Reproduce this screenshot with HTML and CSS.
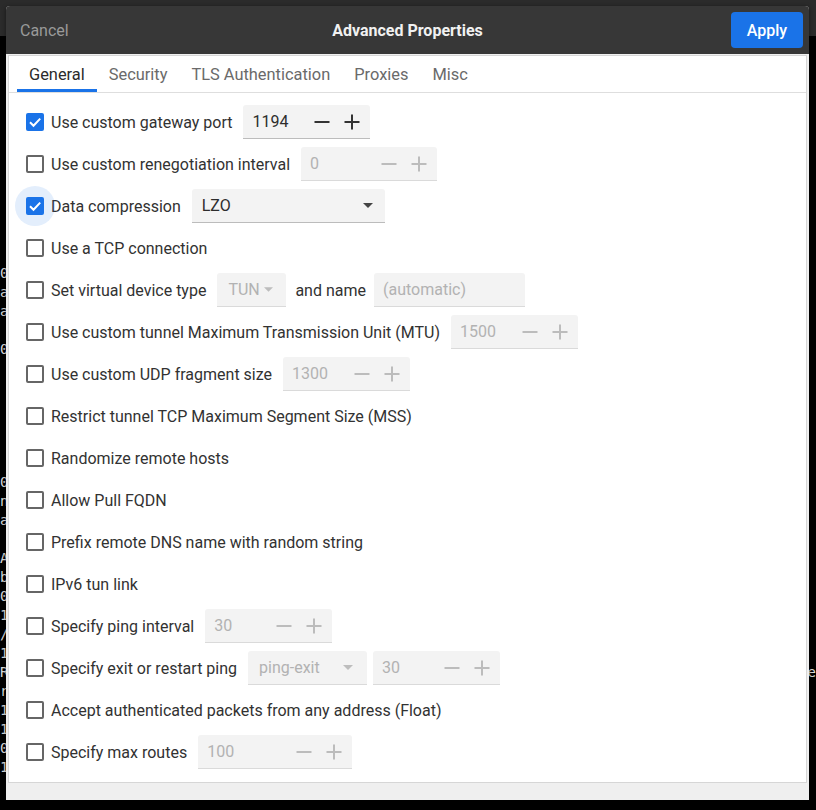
FILE: index.html
```html
<!DOCTYPE html>
<html>
<head>
<meta charset="utf-8">
<title>Advanced Properties</title>
<link rel="stylesheet" href="styles.css">
</head>
<body>
<div class="topbar"></div>
<div class="term"><div class="tl"> </div><div class="tl"> </div><div class="tl"> </div><div class="tl"> </div><div class="tl"> </div><div class="tl"> </div><div class="tl"> </div><div class="tl"> </div><div class="tl"> </div><div class="tl"> </div><div class="tl"> </div><div class="tl"> </div><div class="tl">0</div><div class="tl">a</div><div class="tl">a</div><div class="tl"> </div><div class="tl">0</div><div class="tl"> </div><div class="tl"> </div><div class="tl"> </div><div class="tl"> </div><div class="tl"> </div><div class="tl"> </div><div class="tl">0</div><div class="tl">n</div><div class="tl">a</div><div class="tl"> </div><div class="tl">A</div><div class="tl">b</div><div class="tl">0</div><div class="tl">1</div><div class="tl">/</div><div class="tl">1</div><div class="tl"><span>R</span><span class="tail">e</span></div><div class="tl">r</div><div class="tl">1</div><div class="tl">1</div><div class="tl">0</div><div class="tl">1</div></div>

<div class="dialog">
  <div class="header">
    <span class="cancel">Cancel</span>
    <span class="title">Advanced Properties</span>
    <span class="apply">Apply</span>
  </div>
  <div class="content">
    <div class="frame">
      <div class="tabs">
        <span class="tab active">General</span>
        <span class="tab">Security</span>
        <span class="tab">TLS Authentication</span>
        <span class="tab">Proxies</span>
        <span class="tab">Misc</span>
      </div>
      <div class="rows">
        <div class="row">
          <span class="check checked"><span class="box"><svg viewBox="0 0 18 18" width="18" height="18"><polyline points="4,9.3 7.5,12.8 14.2,5.6" fill="none" stroke="#fff" stroke-width="2"/></svg></span><span>Use custom gateway port</span></span>
          <span class="field spin"><span class="val">1194</span><span class="btns"><svg viewBox="0 0 16 16" width="16" height="16"><path d="M0.5 8h15" stroke="currentColor" stroke-width="2"/></svg><svg viewBox="0 0 16 16" width="16" height="16"><path d="M0.5 8h15M8 0.5v15" stroke="currentColor" stroke-width="2"/></svg></span></span>
        </div>
        <div class="row">
          <span class="check"><span class="box"></span><span>Use custom renegotiation interval</span></span>
          <span class="field spin spin-wide disabled"><span class="val">0</span><span class="btns"><svg viewBox="0 0 16 16" width="16" height="16"><path d="M0.5 8h15" stroke="currentColor" stroke-width="2"/></svg><svg viewBox="0 0 16 16" width="16" height="16"><path d="M0.5 8h15M8 0.5v15" stroke="currentColor" stroke-width="2"/></svg></span></span>
        </div>
        <div class="row">
          <span class="check checked focused"><span class="box"><svg viewBox="0 0 18 18" width="18" height="18"><polyline points="4,9.3 7.5,12.8 14.2,5.6" fill="none" stroke="#fff" stroke-width="2"/></svg></span><span>Data compression</span></span>
          <span class="field combo combo-lzo"><span class="val">LZO</span><svg class="arrow" viewBox="0 0 10 5" width="10" height="5"><polygon points="0,0 10,0 5,5" fill="currentColor"/></svg></span>
        </div>
        <div class="row">
          <span class="check"><span class="box"></span><span>Use a TCP connection</span></span>
        </div>
        <div class="row">
          <span class="check"><span class="box"></span><span>Set virtual device type</span></span>
          <span class="group">
            <span class="field combo combo-tun disabled"><span class="val">TUN</span><svg class="arrow" viewBox="0 0 10 5" width="9" height="5"><polygon points="0,0 10,0 5,5" fill="currentColor"/></svg></span>
            <span class="plain">and name</span>
            <span class="field entry-name disabled">(automatic)</span>
          </span>
        </div>
        <div class="row">
          <span class="check"><span class="box"></span><span>Use custom tunnel Maximum Transmission Unit (MTU)</span></span>
          <span class="field spin disabled"><span class="val">1500</span><span class="btns"><svg viewBox="0 0 16 16" width="16" height="16"><path d="M0.5 8h15" stroke="currentColor" stroke-width="2"/></svg><svg viewBox="0 0 16 16" width="16" height="16"><path d="M0.5 8h15M8 0.5v15" stroke="currentColor" stroke-width="2"/></svg></span></span>
        </div>
        <div class="row">
          <span class="check"><span class="box"></span><span>Use custom UDP fragment size</span></span>
          <span class="field spin disabled"><span class="val">1300</span><span class="btns"><svg viewBox="0 0 16 16" width="16" height="16"><path d="M0.5 8h15" stroke="currentColor" stroke-width="2"/></svg><svg viewBox="0 0 16 16" width="16" height="16"><path d="M0.5 8h15M8 0.5v15" stroke="currentColor" stroke-width="2"/></svg></span></span>
        </div>
        <div class="row">
          <span class="check"><span class="box"></span><span>Restrict tunnel TCP Maximum Segment Size (MSS)</span></span>
        </div>
        <div class="row">
          <span class="check"><span class="box"></span><span>Randomize remote hosts</span></span>
        </div>
        <div class="row">
          <span class="check"><span class="box"></span><span>Allow Pull FQDN</span></span>
        </div>
        <div class="row">
          <span class="check"><span class="box"></span><span>Prefix remote DNS name with random string</span></span>
        </div>
        <div class="row">
          <span class="check"><span class="box"></span><span>IPv6 tun link</span></span>
        </div>
        <div class="row">
          <span class="check"><span class="box"></span><span>Specify ping interval</span></span>
          <span class="field spin disabled"><span class="val">30</span><span class="btns"><svg viewBox="0 0 16 16" width="16" height="16"><path d="M0.5 8h15" stroke="currentColor" stroke-width="2"/></svg><svg viewBox="0 0 16 16" width="16" height="16"><path d="M0.5 8h15M8 0.5v15" stroke="currentColor" stroke-width="2"/></svg></span></span>
        </div>
        <div class="row">
          <span class="check"><span class="box"></span><span>Specify exit or restart ping</span></span>
          <span class="group group-tight">
            <span class="field combo combo-ping disabled"><span class="val">ping-exit</span><svg class="arrow" viewBox="0 0 10 5" width="10" height="5"><polygon points="0,0 10,0 5,5" fill="currentColor"/></svg></span>
            <span class="field spin disabled"><span class="val">30</span><span class="btns"><svg viewBox="0 0 16 16" width="16" height="16"><path d="M0.5 8h15" stroke="currentColor" stroke-width="2"/></svg><svg viewBox="0 0 16 16" width="16" height="16"><path d="M0.5 8h15M8 0.5v15" stroke="currentColor" stroke-width="2"/></svg></span></span>
          </span>
        </div>
        <div class="row">
          <span class="check"><span class="box"></span><span>Accept authenticated packets from any address (Float)</span></span>
        </div>
        <div class="row">
          <span class="check"><span class="box"></span><span>Specify max routes</span></span>
          <span class="field spin spin-xwide disabled"><span class="val">100</span><span class="btns"><svg viewBox="0 0 16 16" width="16" height="16"><path d="M0.5 8h15" stroke="currentColor" stroke-width="2"/></svg><svg viewBox="0 0 16 16" width="16" height="16"><path d="M0.5 8h15M8 0.5v15" stroke="currentColor" stroke-width="2"/></svg></span></span>
        </div>
      </div>
    </div>
  </div>
</div>
</body>
</html>
```

FILE: styles.css
```css
html, body {
  margin: 0;
  padding: 0;
}

body {
  width: 816px;
  height: 810px;
  overflow: hidden;
  background: #000;
  position: relative;
  font-family: Roboto, "Noto Sans", sans-serif;
}

.topbar {
  height: 36px;
  background: #2b2b2b;
}

.term {
  font-family: "DejaVu Sans Mono", monospace;
  font-size: 14px;
  line-height: 19px;
  color: #dcdcdc;
  white-space: pre;
}

.tl {
  height: 19px;
}

.tail {
  padding-left: 799px;
}

.dialog {
  position: absolute;
  left: 6px;
  top: 6px;
  width: 803px;
  height: 794px;
  display: flex;
  flex-direction: column;
  background: #efefef;
  border-radius: 4px 4px 0 0;
  overflow: hidden;
  box-shadow: 0 1px 4px rgba(0, 0, 0, 0.5);
}

.header {
  flex: none;
  height: 48px;
  box-sizing: border-box;
  background: #373737;
  display: grid;
  grid-template-columns: 1fr auto 1fr;
  align-items: center;
  padding: 0 6px;
}

.cancel {
  justify-self: start;
  margin-left: 8px;
  color: #9a9a9a;
  font-size: 16px;
}

.title {
  color: #f1f1f1;
  font-weight: 700;
  font-size: 16px;
}

.apply {
  justify-self: end;
  width: 72px;
  height: 36px;
  border-radius: 4px;
  background: #1a73e8;
  color: #fff;
  font-size: 16px;
  font-weight: 500;
  display: flex;
  align-items: center;
  justify-content: center;
}

.content {
  flex: 1;
  display: flex;
  padding: 1px 2px 17px;
}

.frame {
  flex: 1;
  background: #fff;
  border: 1px solid #d6d6d6;
  display: flex;
  flex-direction: column;
}

.tabs {
  display: flex;
  height: 36px;
  border-bottom: 1px solid #dedede;
  padding-left: 8px;
}

.tab {
  display: flex;
  align-items: center;
  padding: 0 12px;
  font-size: 16.4px;
  color: #6a6a6a;
}

.tab.active {
  color: #2b2b2b;
  box-shadow: inset 0 -3px 0 #1a73e8;
}

.rows {
  display: flex;
  flex-direction: column;
  gap: 8px;
  padding: 12px 0 0 17px;
}

.row {
  display: flex;
  align-items: center;
  height: 34px;
  gap: 11px;
  font-size: 16px;
  color: #323232;
}

.check {
  position: relative;
  display: flex;
  align-items: center;
  gap: 7px;
}

.box {
  position: relative;
  width: 18px;
  height: 18px;
  box-sizing: border-box;
  border: 2px solid #666;
  border-radius: 2px;
  background: #fff;
  z-index: 1;
}

.checked .box {
  border: none;
  background: #1a73e8;
}

.box svg {
  display: block;
}

.focused::before {
  content: "";
  position: absolute;
  left: -11px;
  top: 50%;
  width: 40px;
  height: 40px;
  margin-top: -20px;
  border-radius: 50%;
  background: rgba(26, 115, 232, 0.12);
}

.group {
  display: flex;
  align-items: center;
  gap: 8px;
}

.group-tight {
  gap: 6px;
}

.plain {
  margin-left: 1px;
}

.field {
  height: 34px;
  box-sizing: border-box;
  display: flex;
  align-items: center;
  background: #f3f3f3;
  border-bottom: 1px solid #bcbcbc;
  border-radius: 3px 3px 0 0;
  color: #2d2d2d;
  font-size: 16px;
  padding: 0 10px 0 9px;
}

.field.disabled {
  color: #b2b2b2;
  border-bottom-color: #dadada;
}

.spin {
  width: 127px;
}

.spin-wide {
  width: 136px;
}

.spin-xwide {
  width: 154px;
}

.val {
  flex: 1;
  white-space: nowrap;
}

.btns {
  display: flex;
  gap: 14px;
  color: #333;
}

.disabled .btns {
  color: #bcbcbc;
}

.btns svg {
  display: block;
}

.combo {
  padding: 0 12px 0 10px;
}

.combo-lzo {
  width: 193px;
}

.combo-tun {
  width: 69px;
  padding-left: 11px;
  padding-right: 13px;
}

.combo-ping {
  width: 119px;
  padding-left: 11px;
  padding-right: 14px;
}

.arrow {
  display: block;
  color: #444;
  flex: none;
}

.disabled .arrow {
  color: #bdbdbd;
}

.entry-name {
  width: 151px;
}
```
